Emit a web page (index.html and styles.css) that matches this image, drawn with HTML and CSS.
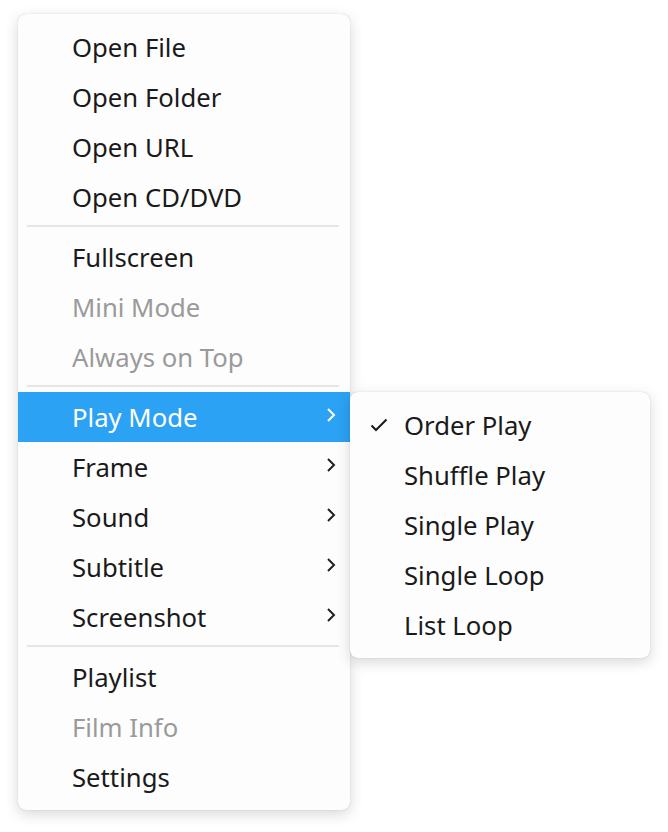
FILE: index.html
```html
<!DOCTYPE html>
<html>
<head>
<meta charset="utf-8">
<link rel="stylesheet" href="styles.css">
</head>
<body>
<div class="stage">
  <div class="menu main">
    <div class="item">Open File</div>
    <div class="item">Open Folder</div>
    <div class="item">Open URL</div>
    <div class="item">Open CD/DVD</div>
    <div class="sep"></div>
    <div class="item">Fullscreen</div>
    <div class="item disabled">Mini Mode</div>
    <div class="item disabled">Always on Top</div>
    <div class="sep"></div>
    <div class="item sub active">Play Mode<svg class="chev" viewBox="0 0 10 16"><path d="M2 2 L8 8 L2 14" fill="none" stroke="currentColor" stroke-width="2"/></svg></div>
    <div class="item sub">Frame<svg class="chev" viewBox="0 0 10 16"><path d="M2 2 L8 8 L2 14" fill="none" stroke="currentColor" stroke-width="2"/></svg></div>
    <div class="item sub">Sound<svg class="chev" viewBox="0 0 10 16"><path d="M2 2 L8 8 L2 14" fill="none" stroke="currentColor" stroke-width="2"/></svg></div>
    <div class="item sub">Subtitle<svg class="chev" viewBox="0 0 10 16"><path d="M2 2 L8 8 L2 14" fill="none" stroke="currentColor" stroke-width="2"/></svg></div>
    <div class="item sub">Screenshot<svg class="chev" viewBox="0 0 10 16"><path d="M2 2 L8 8 L2 14" fill="none" stroke="currentColor" stroke-width="2"/></svg></div>
    <div class="sep"></div>
    <div class="item">Playlist</div>
    <div class="item disabled">Film Info</div>
    <div class="item">Settings</div>
  </div>
  <div class="menu submenu">
    <div class="item checked"><svg class="check" viewBox="0 0 18 16"><path d="M1.5 8.5 L6 13 L16.5 2.5" fill="none" stroke="currentColor" stroke-width="2"/></svg>Order Play</div>
    <div class="item">Shuffle Play</div>
    <div class="item">Single Play</div>
    <div class="item">Single Loop</div>
    <div class="item">List Loop</div>
  </div>
</div>
</body>
</html>
```

FILE: styles.css
```css
html, body {
  margin: 0;
  padding: 0;
  background: #ffffff;
}
body {
  font-family: "Noto Sans", "Open Sans", sans-serif;
  width: 668px;
  height: 832px;
  overflow: hidden;
}
.stage {
  position: relative;
  width: 668px;
  height: 832px;
}
.menu {
  position: absolute;
  background: #fdfdfd;
  border-radius: 8px;
  padding: 8px 0;
  box-shadow: 0 0 1px rgba(0,0,0,0.25), 0 4px 14px rgba(0,0,0,0.16);
  box-sizing: border-box;
}
.main {
  left: 18px;
  top: 14px;
  width: 332px;
}
.submenu {
  left: 350px;
  top: 392px;
  width: 300px;
}
.item {
  position: relative;
  height: 50px;
  display: flex;
  align-items: center;
  padding-left: 54px;
  padding-top: 1px;
  box-sizing: border-box;
  font-size: 25.7px;
  color: #1a1a1a;
}
.item.disabled {
  color: #9a9a9a;
}
.item.active {
  background: #2ca2f4;
  color: #ffffff;
}
.sep {
  height: 10px;
  display: flex;
  align-items: flex-start;
  padding: 0 11px 0 9px;
}
.sep::before {
  content: "";
  display: block;
  margin-top: 3px;
  height: 2px;
  flex: 1;
  background: #e6e6e6;
}
.chev {
  position: absolute;
  left: 308px;
  top: 15px;
  width: 10px;
  height: 16px;
  color: #202020;
}
.item.active .chev {
  color: #ffffff;
}
.check {
  position: absolute;
  left: 20px;
  top: 17px;
  width: 18px;
  height: 16px;
  color: #1a1a1a;
}
```
